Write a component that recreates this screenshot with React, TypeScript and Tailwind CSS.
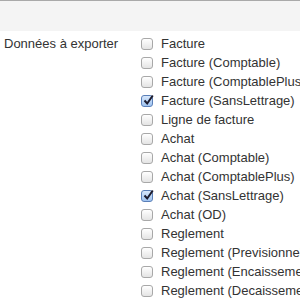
import React from "react";

const items: [string, boolean][] = [
  ["Facture", false],
  ["Facture (Comptable)", false],
  ["Facture (ComptablePlus)", false],
  ["Facture (SansLettrage)", true],
  ["Ligne de facture", false],
  ["Achat", false],
  ["Achat (Comptable)", false],
  ["Achat (ComptablePlus)", false],
  ["Achat (SansLettrage)", true],
  ["Achat (OD)", false],
  ["Reglement", false],
  ["Reglement (Previsionnel)", false],
  ["Reglement (Encaissement)", false],
  ["Reglement (Decaissement)", false],
];

const Box = ({ checked }: { checked: boolean }) => (
  <span
    className={
      "relative inline-block w-[12px] h-[12px] rounded-[3px] border shrink-0 " +
      (checked
        ? "border-[#5a7fb8] bg-gradient-to-b from-[#d7e7fb] to-[#9fc3f0]"
        : "border-[#a8a8a8] bg-gradient-to-b from-[#ffffff] to-[#e4e4e4]")
    }
  >
    {checked && (
      <svg className="absolute left-[1px] -top-[2px]" width="12" height="12" viewBox="0 0 12 12">
        <path d="M1.5 6.5 L4.2 9.5 L9.8 1.5" fill="none" stroke="#1b1b2e" strokeWidth="2" />
      </svg>
    )}
  </span>
);

export default function App() {
  return (
    <div className="w-[300px] h-[300px] overflow-hidden bg-white text-[13px] text-[#333] font-['Liberation_Sans',Arial,sans-serif]">
      <div className="h-[31px] border-t border-[#a9a9a9] bg-[#f4f4f4]" />
      <div className="flex pt-[3px]">
        <div className="w-[141px] shrink-0 pl-[4px] h-[19px] leading-[19px] whitespace-nowrap">
          Données à exporter
        </div>
        <div className="flex flex-col">
          {items.map(([label, checked]) => (
            <div key={label} className="flex items-center h-[19px] whitespace-nowrap">
              <Box checked={checked} />
              <span className="ml-[8px]">{label}</span>
            </div>
          ))}
        </div>
      </div>
    </div>
  );
}
